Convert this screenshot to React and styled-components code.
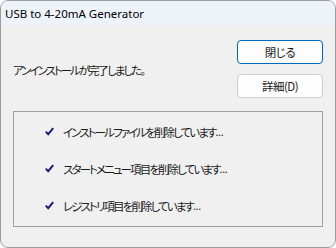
import React from "react";
import styled, { createGlobalStyle } from "styled-components";

const Global = createGlobalStyle`
  html, body { margin: 0; padding: 0; background: #ffffff; }
  * { box-sizing: border-box; }
`;

const Window = styled.div`
  width: 336px;
  height: 248px;
  border: 1px solid #9c9c9c;
  border-radius: 8px;
  overflow: hidden;
  background: #f0f0f0;
  display: flex;
  flex-direction: column;
  font-family: "Noto Sans", "Noto Sans CJK JP", sans-serif;
  color: #1a1a1a;
`;

const TitleBar = styled.div`
  height: 25px;
  background: #eef3fa;
  display: flex;
  align-items: center;
  padding-left: 4px;
  font-size: 11.5px;
  color: #000;
  flex-shrink: 0;
`;

const Body = styled.div`
  flex: 1;
  padding: 14px 12px 0 12px;
  display: flex;
  flex-direction: column;
`;

const TopRow = styled.div`
  display: flex;
  align-items: center;
  justify-content: space-between;
`;

const jp = `
  font-family: "Noto Sans CJK JP", sans-serif;
  font-size: 11.5px;
  font-feature-settings: "palt";
  letter-spacing: -2px;
`;

const Message = styled.div`
  ${jp}
  padding-top: 1px;
`;

const ButtonCol = styled.div`
  display: flex;
  flex-direction: column;
  gap: 10px;
`;

const Button = styled.button`
  width: 86px;
  height: 24px;
  border-radius: 4px;
  border: 1px solid ${(p) => (p.$default ? "#0067c0" : "#cfcfcf")};
  background: #fdfdfd;
  ${jp}
  letter-spacing: -0.5px;
  color: #1a1a1a;
  padding: 0;
  display: flex;
  align-items: center;
  justify-content: center;
`;

const Group = styled.div`
  margin-top: 13px;
  height: 116px;
  border: 1px solid #a0a0a0;
  padding: 1px 0;
  display: flex;
  flex-direction: column;
`;

const Item = styled.div`
  height: 37px;
  display: flex;
  align-items: center;
  padding-left: 31px;
  ${jp}
  letter-spacing: -1.9px;
`;

const Dots = styled.span`
  letter-spacing: -0.3px;
  font-family: "Noto Sans", sans-serif;
  font-size: 11px;
`;

const CheckBox = styled.span`
  width: 9px;
  height: 9px;
  margin-right: 9px;
  display: inline-flex;
`;

const Check = () => (
  <CheckBox>
    <svg width="9" height="9" viewBox="0 0 9 9">
      <path d="M0.8 4.6 L3.2 7.2 L8.2 1.2" fill="none" stroke="#1c1c78" strokeWidth="2" />
    </svg>
  </CheckBox>
);

const items = [
  "インストールファイルを削除しています",
  "スタートメニュー項目を削除しています",
  "レジストリ項目を削除しています",
];

export default function App() {
  return (
    <>
      <Global />
      <Window>
        <TitleBar>USB to 4-20mA Generator</TitleBar>
        <Body>
          <TopRow>
            <Message>アンインストールが完了しました。</Message>
            <ButtonCol>
              <Button $default>閉じる</Button>
              <Button>詳細(D)</Button>
            </ButtonCol>
          </TopRow>
          <Group>
            {items.map((t) => (
              <Item key={t}>
                <Check />
                <span>{t}</span>
                <Dots>...</Dots>
              </Item>
            ))}
          </Group>
        </Body>
      </Window>
    </>
  );
}
